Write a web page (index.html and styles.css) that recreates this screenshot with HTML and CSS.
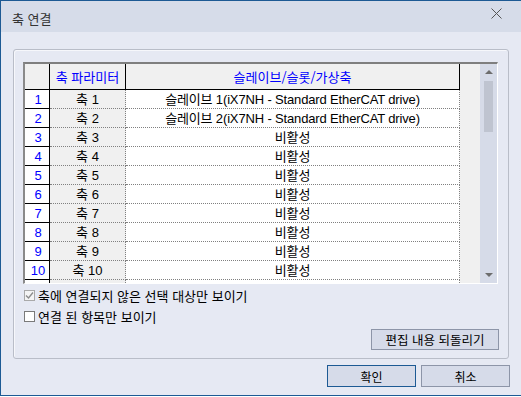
FILE: index.html
```html
<!DOCTYPE html>
<html lang="ko">

<head>
    <meta charset="UTF-8">
    <title>축 연결</title>
    <link rel="stylesheet" href="styles.css">
</head>

<body>
    <div class="window">
        <div class="titlebar">
            <span class="title">축 연결</span>
            <span class="close">
                <svg width="11" height="11" viewBox="0 0 11 11">
                    <path d="M0.5 0.5 L10.5 10.5 M10.5 0.5 L0.5 10.5" stroke="#555" stroke-width="1" fill="none" />
                </svg>
            </span>
        </div>

        <div class="content">
            <div class="group">
                <div class="grid-frame">
                    <div class="grid">
                        <div class="cell corner"></div>
                        <div class="cell head">축 파라미터</div>
                        <div class="cell head">슬레이브/슬롯/가상축</div>
                        <div class="cell filler"></div>

                        <div class="cell num">1</div>
                        <div class="cell axis">축 1</div>
                        <div class="cell slave">슬레이브 1(iX7NH - Standard EtherCAT drive)</div>
                        <div class="cell filler"></div>

                        <div class="cell num">2</div>
                        <div class="cell axis">축 2</div>
                        <div class="cell slave">슬레이브 2(iX7NH - Standard EtherCAT drive)</div>
                        <div class="cell filler"></div>

                        <div class="cell num">3</div>
                        <div class="cell axis">축 3</div>
                        <div class="cell slave">비활성</div>
                        <div class="cell filler"></div>

                        <div class="cell num">4</div>
                        <div class="cell axis">축 4</div>
                        <div class="cell slave">비활성</div>
                        <div class="cell filler"></div>

                        <div class="cell num">5</div>
                        <div class="cell axis">축 5</div>
                        <div class="cell slave">비활성</div>
                        <div class="cell filler"></div>

                        <div class="cell num">6</div>
                        <div class="cell axis">축 6</div>
                        <div class="cell slave">비활성</div>
                        <div class="cell filler"></div>

                        <div class="cell num">7</div>
                        <div class="cell axis">축 7</div>
                        <div class="cell slave">비활성</div>
                        <div class="cell filler"></div>

                        <div class="cell num">8</div>
                        <div class="cell axis">축 8</div>
                        <div class="cell slave">비활성</div>
                        <div class="cell filler"></div>

                        <div class="cell num">9</div>
                        <div class="cell axis">축 9</div>
                        <div class="cell slave">비활성</div>
                        <div class="cell filler"></div>

                        <div class="cell num">10</div>
                        <div class="cell axis">축 10</div>
                        <div class="cell slave">비활성</div>
                        <div class="cell filler"></div>

                        <!-- next row, only its top edge shows -->
                        <div class="cell num"></div>
                        <div class="cell axis"></div>
                        <div class="cell slave"></div>
                        <div class="cell filler"></div>
                    </div>
                    <div class="scrollbar">
                        <div class="arrow"><span class="tri up"></span></div>
                        <div class="thumb"></div>
                        <div class="track"></div>
                        <div class="arrow"><span class="tri down"></span></div>
                    </div>
                </div>

                <label class="check">
                    <span class="box checked">
                        <svg width="9" height="9" viewBox="0 0 9 9">
                            <path d="M1 4.5 L3.5 7 L8 1.5" stroke="#8c8c8c" stroke-width="1.4" fill="none" />
                        </svg>
                    </span>
                    축에 연결되지 않은 선택 대상만 보이기
                </label>
                <label class="check">
                    <span class="box"></span>
                    연결 된 항목만 보이기
                </label>

                <div class="group-actions">
                    <button class="btn wide">편집 내용 되돌리기</button>
                </div>
            </div>

            <div class="dialog-actions">
                <button class="btn default">확인</button>
                <button class="btn">취소</button>
            </div>
        </div>
    </div>
</body>

</html>
```

FILE: styles.css
```css
* {
    margin: 0;
    padding: 0;
    box-sizing: border-box;
}

body {
    background-color: #ffffff;
    font-family: 'Liberation Sans', 'Noto Sans CJK KR', sans-serif;
    font-size: 12px;
    color: #000;
}

.window {
    width: 521px;
    height: 396px;
    border-top: 1px solid #1d5a94;
    border-left: 1px solid #1d5a94;
    border-bottom: 1px solid #1d5a94;
    background-color: #e6e9f3;
    display: flex;
    flex-direction: column;
}

.titlebar {
    height: 31px;
    background-color: #d6dce9;
    display: flex;
    align-items: flex-start;
    justify-content: space-between;
    padding: 0 19px 0 11px;
}

.title {
    font-family: 'Noto Sans CJK KR', sans-serif;
    font-size: 13px;
    line-height: 18px;
    margin-top: 9px;
    color: #333;
}

.close {
    display: flex;
    margin-top: 7px;
}

.content {
    flex: 1;
    padding: 17px 12px 0 12px;
    display: flex;
    flex-direction: column;
}

.group {
    height: 310px;
    border: 1px solid #b9bdc8;
    border-radius: 3px;
    box-shadow: inset 1px 1px 0 #f6f7fb;
    padding: 12px 10px 0 9px;
    display: flex;
    flex-direction: column;
}

.grid-frame {
    width: 475px;
    height: 222px;
    border-top: 2px solid #7f7f7f;
    border-left: 2px solid #8a8a8a;
    border-right: 1px solid #ffffff;
    border-bottom: 1px solid #ffffff;
    display: flex;
    overflow: hidden;
}

.grid {
    flex: 1;
    display: grid;
    grid-template-columns: 25px 76px 334px 20px;
    grid-template-rows: 26px repeat(11, 19px);
    background-color: #f0f0f0;
    overflow: hidden;
    font-size: 13px;
}

.cell {
    display: flex;
    align-items: center;
    justify-content: center;
    white-space: nowrap;
    overflow: hidden;
    line-height: 1;
}

.corner {
    background-color: #f0f0f0;
    border-right: 1px solid #000;
    border-bottom: 1px solid #000;
}

.head {
    background-color: #f0f0f0;
    color: #0000ff;
    border-right: 1px solid #000;
    border-bottom: 1px solid #000;
    font-family: 'Noto Sans CJK KR', sans-serif;
    padding-bottom: 1px;
}

.num {
    background-color: #ffffff;
    color: #0000ff;
    border-right: 1px solid #000;
    border-bottom: 1px solid #000;
    padding-left: 2px;
}

.axis {
    background-color: #f0f0f0;
    border-right: 1px dotted #808080;
    border-bottom: 1px dotted #808080;
}

.slave {
    background-color: #ffffff;
    border-right: 1px dotted #808080;
    border-bottom: 1px dotted #808080;
    letter-spacing: -0.15px;
}

.filler {
    background-color: #f0f0f0;
}

.scrollbar {
    width: 17px;
    background-color: #d6dbe8;
    display: flex;
    flex-direction: column;
    align-items: center;
}

.arrow {
    height: 16px;
    width: 100%;
    display: flex;
    align-items: center;
    justify-content: center;
}

.tri {
    width: 0;
    height: 0;
    border-left: 4px solid transparent;
    border-right: 4px solid transparent;
}

.tri.up {
    border-bottom: 4px solid #6d6d6d;
}

.tri.down {
    border-top: 4px solid #6d6d6d;
}

.thumb {
    width: 9px;
    height: 51px;
    margin-top: 1px;
    background-color: #bfc4d0;
}

.track {
    flex: 1;
}

.check {
    height: 20px;
    display: flex;
    align-items: center;
    gap: 3px;
    padding-left: 1px;
    font-family: 'Noto Sans CJK KR', sans-serif;
    font-size: 13px;
}

.check:first-of-type {
    margin-top: 1px;
    margin-bottom: 1px;
}

.box {
    width: 11px;
    height: 11px;
    border: 1px solid #7a7a7a;
    background-color: #ffffff;
    display: flex;
    align-items: center;
    justify-content: center;
}

.box.checked {
    border-color: #a9a9a9;
    background-color: #f4f4f4;
}

.group-actions {
    display: flex;
    justify-content: flex-end;
    margin-top: 3px;
}

.btn {
    font-family: 'Noto Sans CJK KR', sans-serif;
    font-size: 12px;
    color: #000;
    background-color: #d6dbe9;
    border: 1px solid #8d95a8;
    height: 21px;
    width: 89px;
    cursor: pointer;
}

.btn.wide {
    width: 128px;
    margin-right: -1px;
    font-size: 12.5px;
}

.btn.default {
    border-color: #1d5a94;
}

.dialog-actions {
    display: flex;
    justify-content: flex-end;
    gap: 5px;
    margin-top: 6px;
    margin-right: -1px;
}

.dialog-actions .btn {
    height: 22px;
}
```
